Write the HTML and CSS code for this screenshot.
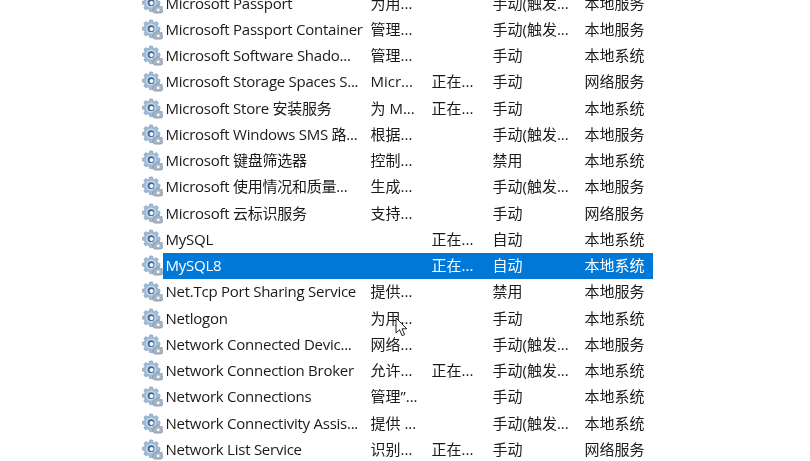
FILE: index.html
```html
<!DOCTYPE html>
<html lang="en">
<head>
  <meta charset="UTF-8">
  <title>Services</title>
  <link rel="stylesheet" href="styles.css">
</head>
<body>

<svg class="defs" width="0" height="0">
  <symbol id="gear" viewBox="0 0 22 22">
    <path d="M8 1h3l.4 2.200 1.700.7L15 2.700l2.200 2.100-1.300 1.900.7 1.700 2.200.4v3l-2.200.4-.7 1.700 1.300 1.900-2.200 2.100-1.900-1.300-1.700.7-.4 2.200H8l-.4-2.200-1.700-.7L4 17.700 1.900 15.600l1.300-1.900-.7-1.700L.3 11.600v-3l2.200-.4.7-1.700-1.300-1.900L4 2.700l1.900 1.200 1.700-.7z" fill="#9dbcdc" stroke="#7d95b0" stroke-width=".6"/>
    <circle cx="9.500" cy="10.100" r="5.200" fill="#c9daec"/>
    <circle cx="9.500" cy="10.100" r="3.600" fill="#46658a"/>
    <circle cx="10" cy="10.600" r="2.200" fill="#f4f7fb"/>
    <path d="M16 12.500h2l.3 1.200 1.100.5 1-.6 1.300 1.400-.7 1 .4 1.100 1.100.3v1.900l-1.100.3-.4 1.100-2 .4H14l-1.700-.4-.4-1.100-1-.3v-1.900l1-.3.4-1.100-.6-1 1.300-1.400 1 .6 1.100-.5z" fill="#a4b2c1" stroke="#76889b" stroke-width=".5"/>
    <circle cx="17" cy="17.500" r="1.600" fill="#f2f5f8"/>
  </symbol>
</svg>

<div class="service-list">
  <div class="row"><svg class="icon"><use href="#gear"/></svg><span class="name">Microsoft Passport</span><span>为用...</span><span></span><span>手动(触发...</span><span>本地服务</span></div>
  <div class="row"><svg class="icon"><use href="#gear"/></svg><span class="name">Microsoft Passport Container</span><span>管理...</span><span></span><span>手动(触发...</span><span>本地服务</span></div>
  <div class="row"><svg class="icon"><use href="#gear"/></svg><span class="name">Microsoft Software Shado...</span><span>管理...</span><span></span><span>手动</span><span>本地系统</span></div>
  <div class="row"><svg class="icon"><use href="#gear"/></svg><span class="name">Microsoft Storage Spaces S...</span><span>Micr...</span><span>正在...</span><span>手动</span><span>网络服务</span></div>
  <div class="row"><svg class="icon"><use href="#gear"/></svg><span class="name">Microsoft Store 安装服务</span><span>为 M...</span><span>正在...</span><span>手动</span><span>本地系统</span></div>
  <div class="row"><svg class="icon"><use href="#gear"/></svg><span class="name">Microsoft Windows SMS 路...</span><span>根据...</span><span></span><span>手动(触发...</span><span>本地服务</span></div>
  <div class="row"><svg class="icon"><use href="#gear"/></svg><span class="name">Microsoft 键盘筛选器</span><span>控制...</span><span></span><span>禁用</span><span>本地系统</span></div>
  <div class="row"><svg class="icon"><use href="#gear"/></svg><span class="name">Microsoft 使用情况和质量...</span><span>生成...</span><span></span><span>手动(触发...</span><span>本地服务</span></div>
  <div class="row"><svg class="icon"><use href="#gear"/></svg><span class="name">Microsoft 云标识服务</span><span>支持...</span><span></span><span>手动</span><span>网络服务</span></div>
  <div class="row"><svg class="icon"><use href="#gear"/></svg><span class="name">MySQL</span><span></span><span>正在...</span><span>自动</span><span>本地系统</span></div>
  <div class="row selected"><svg class="icon"><use href="#gear"/></svg><span class="name">MySQL8</span><span></span><span>正在...</span><span>自动</span><span>本地系统</span></div>
  <div class="row"><svg class="icon"><use href="#gear"/></svg><span class="name">Net.Tcp Port Sharing Service</span><span>提供...</span><span></span><span>禁用</span><span>本地服务</span></div>
  <div class="row"><svg class="icon"><use href="#gear"/></svg><span class="name">Netlogon</span><span>为用...</span><span></span><span>手动</span><span>本地系统</span></div>
  <div class="row"><svg class="icon"><use href="#gear"/></svg><span class="name">Network Connected Devic...</span><span>网络...</span><span></span><span>手动(触发...</span><span>本地服务</span></div>
  <div class="row"><svg class="icon"><use href="#gear"/></svg><span class="name">Network Connection Broker</span><span>允许...</span><span>正在...</span><span>手动(触发...</span><span>本地系统</span></div>
  <div class="row"><svg class="icon"><use href="#gear"/></svg><span class="name">Network Connections</span><span>管理”...</span><span></span><span>手动</span><span>本地系统</span></div>
  <div class="row"><svg class="icon"><use href="#gear"/></svg><span class="name">Network Connectivity Assis...</span><span>提供 ...</span><span></span><span>手动(触发...</span><span>本地系统</span></div>
  <div class="row"><svg class="icon"><use href="#gear"/></svg><span class="name">Network List Service</span><span>识别...</span><span>正在...</span><span>手动</span><span>网络服务</span></div>
</div>

<svg class="cursor" width="14" height="20" viewBox="0 0 14 20">
  <path d="M1 1v15l3.500-3.300 2.600 6 2.500-1.100-2.600-5.800h4.800z" fill="#fff" stroke="#222" stroke-width="1"/>
</svg>

</body>
</html>
```

FILE: styles.css
```css
html, body {
  height: 100%;
  overflow: hidden;
}

body {
  margin: 0;
  background-color: #fff;
  font-family: "Open Sans", "Noto Sans CJK SC", sans-serif;
  font-size: 15px;
  color: #1a1a1a;
}

.defs {
  position: absolute;
}

.service-list {
  margin-top: -10px;
  padding-left: 142px;
  width: 511px;
  filter: blur(0.3px);
}

.row {
  display: grid;
  grid-template-columns: 21px 208px 61px 61px 92px 68px;
  align-items: center;
  height: 26.25px;
  white-space: nowrap;
  line-height: 25px;
}

.name {
  padding-left: 2.5px;
  letter-spacing: -0.25px;
}

.row span:not(.name) {
  margin-left: -0.5px;
}

.icon {
  width: 21px;
  height: 21px;
}

.selected {
  background: linear-gradient(to right, #fff 21px, #0078d7 21px);
  color: #fff;
}

.cursor {
  position: absolute;
  left: 395px;
  top: 317px;
}
```
